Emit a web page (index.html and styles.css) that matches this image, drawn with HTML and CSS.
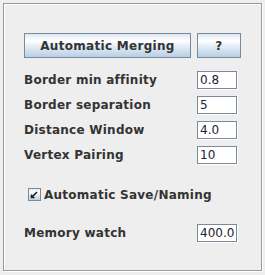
FILE: index.html
```html
<!DOCTYPE html>
<html>
<head>
<meta charset="utf-8">
<link rel="stylesheet" href="styles.css">
</head>
<body>
<div class="panel">
  <div class="buttons">
    <div class="btn btn-wide">Automatic Merging</div>
    <div class="btn btn-small">?</div>
  </div>
  <div class="row first">
    <span class="label">Border min affinity</span>
    <span class="field">0.8</span>
  </div>
  <div class="row">
    <span class="label">Border separation</span>
    <span class="field">5</span>
  </div>
  <div class="row">
    <span class="label">Distance Window</span>
    <span class="field">4.0</span>
  </div>
  <div class="row">
    <span class="label">Vertex Pairing</span>
    <span class="field">10</span>
  </div>
  <div class="check-row">
    <svg class="check" width="13" height="13" viewBox="0 0 13 13">
      <defs>
        <linearGradient id="cg" x1="0" y1="0" x2="0" y2="1">
          <stop offset="0" stop-color="#dde8f3"/>
          <stop offset="0.3" stop-color="#ffffff"/>
          <stop offset="0.6" stop-color="#dde8f3"/>
          <stop offset="1" stop-color="#b8cfe5"/>
        </linearGradient>
      </defs>
      <rect x="0.5" y="0.5" width="12" height="12" fill="url(#cg)" stroke="#7a8a99"/>
      <path d="M3.5 6.5 L3.5 9.5 L6.5 9.5 M4 9 L9 4" stroke="#222" stroke-width="1.6" fill="none"/>
    </svg>
    <span class="check-label">Automatic Save/Naming</span>
  </div>
  <div class="row memory">
    <span class="label">Memory watch</span>
    <span class="field">400.0</span>
  </div>
</div>
</body>
</html>
```
FILE: styles.css
```css
html, body {
  margin: 0;
  padding: 0;
  background: #eeeeee;
}
body {
  width: 265px;
  height: 275px;
  overflow: hidden;
  font-family: "DejaVu Sans", sans-serif;
  font-size: 12px;
  color: #333333;
}
.panel {
  box-sizing: border-box;
  margin: 3px;
  width: 259px;
  height: 268px;
  border: 1px solid #9a9a9a;
  box-shadow: inset 1px 1px 0 #ffffff, 1px 1px 0 #ffffff;
  padding: 29px 0 0 20px;
  display: flex;
  flex-direction: column;
}
.buttons {
  display: flex;
  gap: 6px;
}
.btn {
  box-sizing: border-box;
  height: 25px;
  border: 1px solid #7a8a99;
  background: linear-gradient(to bottom, #dde8f3 0%, #ffffff 30%, #dde8f3 60%, #b8cfe5 100%);
  font-weight: bold;
  letter-spacing: 0.3px;
  display: flex;
  align-items: center;
  justify-content: center;
  line-height: 14px;
}
.btn-wide { width: 167px; }
.btn-small { width: 44px; }
.row {
  display: flex;
  align-items: center;
  height: 18px;
  margin-top: 7px;
}
.row.first { margin-top: 13px; }
.label {
  width: 173px;
  font-weight: bold;
  letter-spacing: 0.25px;
  line-height: 14px;
}
.field {
  box-sizing: border-box;
  width: 40px;
  height: 18px;
  border: 1px solid #7a8a99;
  box-shadow: 1px 1px 0 #ffffff;
  background: #ffffff;
  padding-left: 2px;
  line-height: 16px;
  color: #222233;
  overflow: hidden;
  white-space: nowrap;
}
.check-row {
  display: flex;
  align-items: center;
  margin-top: 24px;
  margin-left: 4px;
  height: 13px;
}
.check { display: block; }
.check-label {
  margin-left: 3px;
  font-weight: bold;
  letter-spacing: 0.25px;
  line-height: 14px;
}
.row.memory { margin-top: 23px; }
```
